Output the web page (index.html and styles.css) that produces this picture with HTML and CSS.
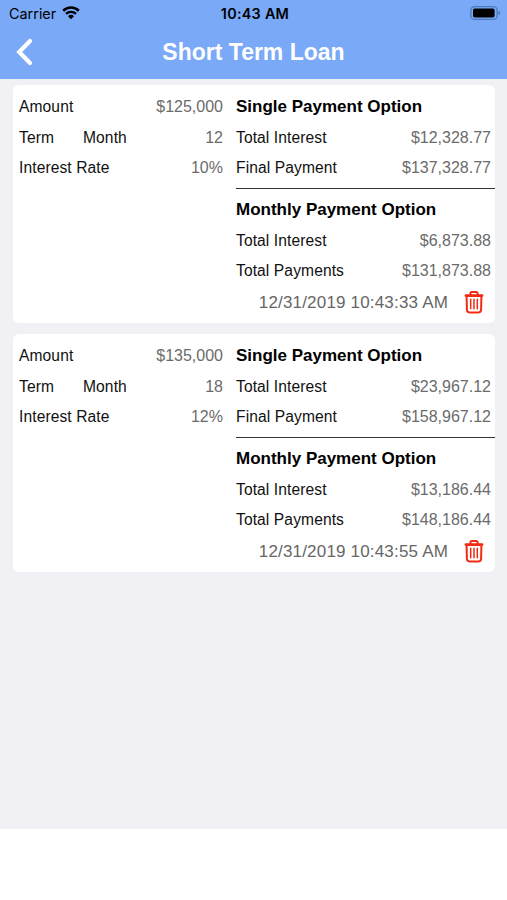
FILE: index.html
```html
<!DOCTYPE html>
<html lang="en">
<head>
    <meta charset="utf-8">
    <title>Short Term Loan</title>
    <link rel="stylesheet" href="styles.css">
</head>
<body>
    <header>
        <div class="status">
            <div class="carrier">
                <span>Carrier</span>
                <svg width="18" height="14" viewBox="0 0 18 14">
                    <path d="M1.2 4.7a11.2 11.2 0 0 1 15.6 0" fill="none" stroke="#000" stroke-width="2.6"/>
                    <path d="M4 7.9a7.2 7.2 0 0 1 10 0" fill="none" stroke="#000" stroke-width="2.4"/>
                    <path d="M6 10.3a4.3 4.3 0 0 1 6 0L9 13.3z"/>
                </svg>
            </div>
            <span class="time">10:43 AM</span>
            <svg class="battery" width="31" height="14" viewBox="0 0 31 14">
                <rect x=".9" y=".7" width="26.2" height="12.6" rx="3.6" fill="none" stroke="#4f7ab8" stroke-width="1.3"/>
                <rect x="3" y="2.5" width="21.6" height="9" rx="1.8"/>
                <path d="M28.5 4.7q1.8 .7 1.8 2.3t-1.8 2.3z" fill="#4f7ab8"/>
            </svg>
        </div>
        <div class="nav">
            <svg class="back" width="18" height="28" viewBox="0 0 18 28">
                <path d="M15 3L4.2 14 15 25" fill="none" stroke="#fff" stroke-width="4.2" stroke-linecap="round" stroke-linejoin="miter"/>
            </svg>
            <h1>Short Term Loan</h1>
        </div>
    </header>

    <main>
        <div class="card">
            <div class="loan">
                <div class="row"><span>Amount</span><span class="value">$125,000</span></div>
                <div class="row"><span class="term">Term</span><span>Month</span><span class="value">12</span></div>
                <div class="row"><span>Interest Rate</span><span class="value">10%</span></div>
            </div>
            <div class="options">
                <h2>Single Payment Option</h2>
                <div class="row"><span>Total Interest</span><span class="value">$12,328.77</span></div>
                <div class="row"><span>Final Payment</span><span class="value">$137,328.77</span></div>
                <hr>
                <h2>Monthly Payment Option</h2>
                <div class="row"><span>Total Interest</span><span class="value">$6,873.88</span></div>
                <div class="row"><span>Total Payments</span><span class="value">$131,873.88</span></div>
                <div class="saved">
                    <span>12/31/2019 10:43:33 AM</span>
                    <svg class="trash" width="20" height="24" viewBox="0 0 20 24">
                        <path d="M2 5.6h16" stroke-width="2.8"/>
                        <path d="M6.4 5V3.4q0-1.5 1.5-1.5h4.2q1.5 0 1.5 1.5V5M2.6 6.5l.3 13.3q.1 2.6 2.6 2.6h9q2.5 0 2.6-2.6l.3-13.3"/>
                        <path d="M6.7 9.2v9.6M10 9.2v9.6M13.3 9.2v9.6" stroke-width="1.5"/>
                    </svg>
                </div>
            </div>
        </div>

        <div class="card">
            <div class="loan">
                <div class="row"><span>Amount</span><span class="value">$135,000</span></div>
                <div class="row"><span class="term">Term</span><span>Month</span><span class="value">18</span></div>
                <div class="row"><span>Interest Rate</span><span class="value">12%</span></div>
            </div>
            <div class="options">
                <h2>Single Payment Option</h2>
                <div class="row"><span>Total Interest</span><span class="value">$23,967.12</span></div>
                <div class="row"><span>Final Payment</span><span class="value">$158,967.12</span></div>
                <hr>
                <h2>Monthly Payment Option</h2>
                <div class="row"><span>Total Interest</span><span class="value">$13,186.44</span></div>
                <div class="row"><span>Total Payments</span><span class="value">$148,186.44</span></div>
                <div class="saved">
                    <span>12/31/2019 10:43:55 AM</span>
                    <svg class="trash" width="20" height="24" viewBox="0 0 20 24">
                        <path d="M2 5.6h16" stroke-width="2.8"/>
                        <path d="M6.4 5V3.4q0-1.5 1.5-1.5h4.2q1.5 0 1.5 1.5V5M2.6 6.5l.3 13.3q.1 2.6 2.6 2.6h9q2.5 0 2.6-2.6l.3-13.3"/>
                        <path d="M6.7 9.2v9.6M10 9.2v9.6M13.3 9.2v9.6" stroke-width="1.5"/>
                    </svg>
                </div>
            </div>
        </div>
    </main>
</body>
</html>
```

FILE: styles.css
```css
* {
    box-sizing: border-box;
}

body {
    margin: 0;
    font-family: "Liberation Sans", Arial, sans-serif;
    font-size: 15.6px;
    color: #111;
    background-color: #fff;
}

header {
    height: 79px;
    background-color: #79a9f7;
}

.status {
    display: grid;
    grid-template-columns: 1fr auto 1fr;
    align-items: center;
    height: 27px;
    padding: 0 6px 0 9px;
    font-family: Inter, sans-serif;
    font-size: 14.4px;
    color: #000;
}

.carrier {
    display: flex;
    align-items: center;
    gap: 6px;
}

.carrier svg {
    margin-bottom: 2px;
}

.time {
    font-weight: 600;
    letter-spacing: 0.25px;
}

.battery {
    justify-self: end;
    margin-bottom: 1px;
}

.nav {
    display: grid;
    grid-template-columns: 40px 1fr 40px;
    align-items: center;
    height: 50px;
}

.back {
    margin-left: 15px;
}

h1 {
    margin: 0;
    font-size: 23px;
    text-align: center;
    color: #fff;
}

main {
    display: flex;
    flex-direction: column;
    gap: 11px;
    height: 750px;
    padding: 6px 12px 0 13px;
    background-color: #f0f0f5;
}

.card {
    display: flex;
    height: 238px;
    padding: 7px 0 0 6px;
    border-radius: 6px;
    background-color: #fff;
}

.loan {
    width: 204px;
    margin-right: 13px;
}

.options {
    flex: 1;
}

.row {
    display: flex;
    align-items: center;
    height: 30.5px;
    letter-spacing: 0.1px;
}

.options .row {
    padding-right: 4px;
}

.term {
    width: 64px;
}

.value {
    margin-left: auto;
    font-size: 16px;
    letter-spacing: 0;
    color: #6b6b6b;
}

h2 {
    margin: 0;
    font-size: 17px;
    line-height: 30.5px;
    color: #000;
}

hr {
    height: 1.5px;
    margin: 4px 0 6px;
    border: none;
    background-color: #333;
}

.saved {
    display: flex;
    align-items: center;
    justify-content: flex-end;
    gap: 16px;
    height: 32px;
    padding-right: 11px;
    font-size: 17px;
    letter-spacing: 0.18px;
    color: #666;
}

.trash {
    margin-bottom: 2px;
    fill: none;
    stroke: #f12b12;
    stroke-width: 2;
    stroke-linecap: round;
}
```
